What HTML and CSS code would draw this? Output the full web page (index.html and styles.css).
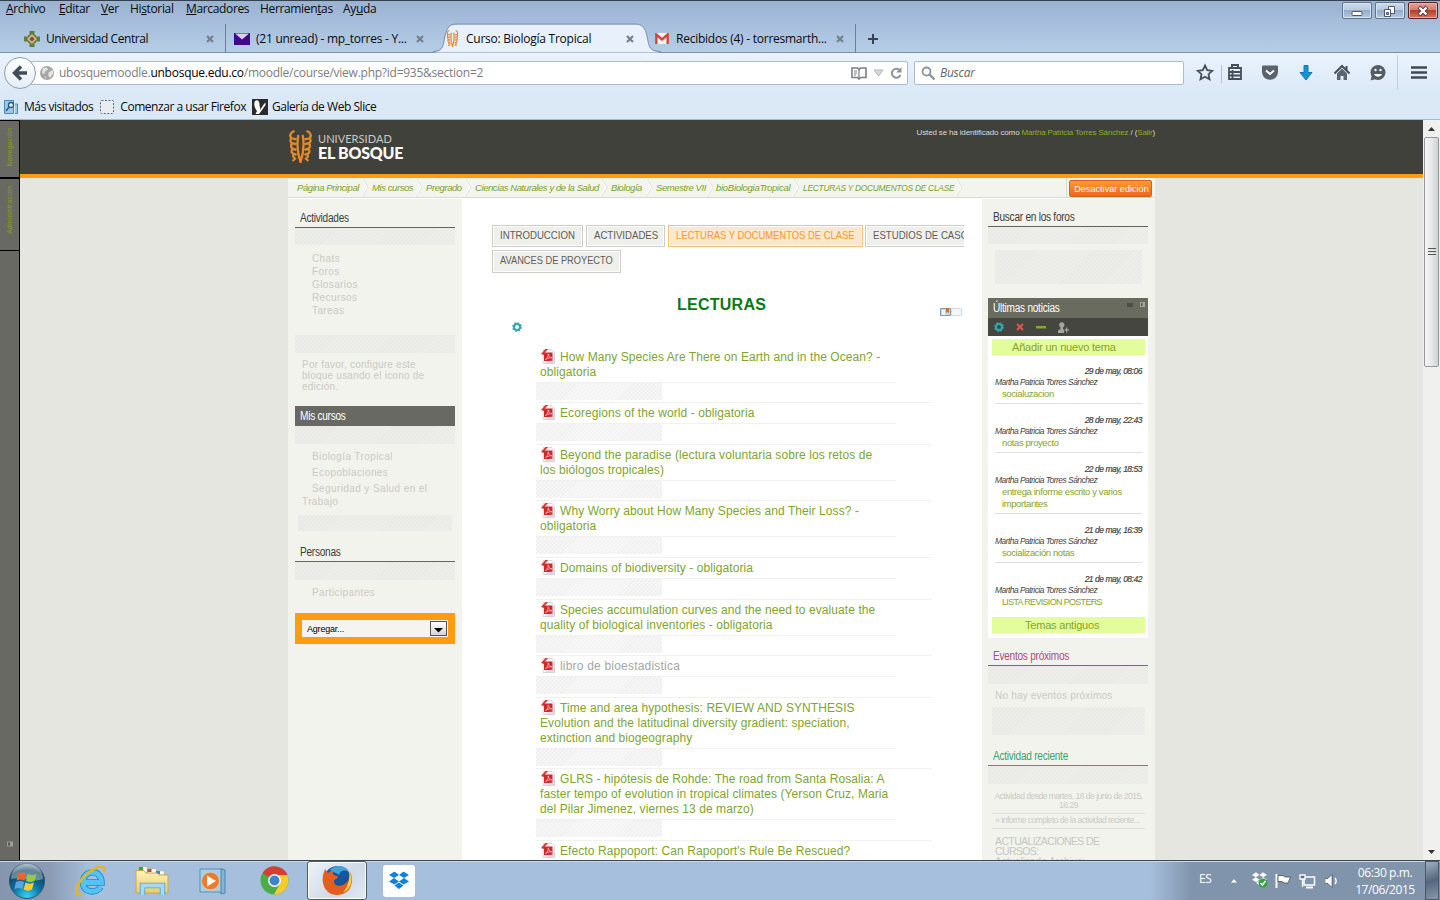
FILE: index.html
```html
<!DOCTYPE html>
<html lang="es">
<head>
<meta charset="utf-8">
<title>Curso: Biología Tropical</title>
<link rel="stylesheet" href="styles.css">
</head>
<body>
<svg class="defs" width="0" height="0">
  <defs>
    <symbol id="pdf" viewBox="0 0 14 15"><path d="M2 .5h9l2.500 2.500v11.500H2z" fill="#f7f5f7" stroke="#ddd8de"/><path d="M3 3.500h8.500v8.500H3z" fill="#d3262b"/><path d="M0 5L4.500 0H7L3 4.500V6z" fill="#d8332f"/><path d="M4.500 10.500C6.500 9 7.500 7 7.200 4.800c.5 2.500 1.800 3.700 3.800 4-2.200-.2-4.500.4-6.500 1.700z" fill="none" stroke="#fbd5d2" stroke-width=".7"/><path d="M3 14.500h10.500V9z" fill="#b9aebb" opacity=".35"/></symbol>
    <symbol id="gear" viewBox="0 0 10 10"><circle cx="5" cy="5" r="3" fill="none" stroke="#2fa9ad" stroke-width="2"/><circle cx="5" cy="5" r="4.200" fill="none" stroke="#2fa9ad" stroke-width="1.400" stroke-dasharray="1.700 1.600"/></symbol>
    <symbol id="beetle" viewBox="0 0 24 33"><g fill="none" stroke="#e58a2b" stroke-width="2.300"><path d="M6 1C2 2 .5 6 3 8c1.500 1.300 3.500.5 5 1.500M3 8c-1.500 2-1.500 4 .5 5s3 .5 4.500 1.500M3.500 13.500c-1.500 2-1 4 .5 5s2.500.5 4 1.500M4 19c-1.500 2-1 4 .5 4.500s2 .5 3.500 1.500M5 24.500c-1 2 0 3 1.500 3.500M7.500 28L4 31"/><path d="M18 1c4 1 5.500 5 3 7-1.500 1.300-3.500.5-5 1.500M21 8c1.500 2 1.500 4-.5 5s-3 .5-4.500 1.500M20.500 13.500c1.500 2 1 4-.5 5s-2.500.5-4 1.500M20 19c1.500 2 1 4-.5 4.500s-2 .5-3.500 1.500M19 24.500c1 2 0 3-1.500 3.500M16.500 28l3.500 3"/><path d="M9.800 5C8.500 13 9 24 12 32c3-8 3.500-19 2.200-27"/></g></symbol>
    <symbol id="x" viewBox="0 0 8 8"><path d="M1 1l6 6M7 1L1 7" stroke="currentColor" stroke-width="2.200"/></symbol>
    <symbol id="crumb" viewBox="0 0 8 19"><path d="M1 0l6 9.500L1 19" fill="none" stroke="#dcddd6"/><path d="M0 0l6 9.500L0 19" fill="none" stroke="#fff"/></symbol>
    <symbol id="dropbox" viewBox="0 0 20 18"><path d="M5.500 0L10 3.500 5 6.500 0 3.500zM14.500 0L10 3.500l5 3 5-3zM0 10l5-3.500 5 3.500-4.500 3zM20 10l-5-3.500-5 3.500 4.500 3zM5.500 14L10 11l4.500 3L10 17.500z" fill="currentColor"/></symbol>
    <linearGradient id="pane" x2="0" y2="1"><stop offset="0" stop-color="#fff3b8"/><stop offset="1" stop-color="#e9cd6b"/></linearGradient>
    <radialGradient id="orb" cx=".5" cy=".95" r=".95"><stop offset="0" stop-color="#2fd6f6"/><stop offset=".45" stop-color="#0b6f9f"/><stop offset=".8" stop-color="#12405f"/><stop offset="1" stop-color="#9fb6c6"/></radialGradient>
  </defs>
</svg>

<header class="chrome">
  <div class="menubar">
    <nav class="menus"><span><u>A</u>rchivo</span><span><u>E</u>ditar</span><span><u>V</u>er</span><span>Hi<u>s</u>torial</span><span><u>M</u>arcadores</span><span>Herramien<u>t</u>as</span><span>Ay<u>u</u>da</span></nav>
    <div class="winbtns">
      <i><svg width="30" height="16"><rect x="10" y="8.500" width="10" height="4" rx="1" fill="#fff" stroke="#4c5767"/></svg></i>
      <i><svg width="30" height="16" fill="#fff" stroke="#4c5767"><path d="M13.500 3.500h6v7h-6z"/><path d="M9.500 6.500h6v7h-6z"/><path d="M11.500 9.500h2v2h-2z" fill="#8da6c4"/></svg></i>
      <i class="close"><svg width="30" height="16"><path d="M11 4l8 8M19 4l-8 8" stroke="#54333a" stroke-width="4"/><path d="M11.500 4.500l7 7M18.500 4.500l-7 7" stroke="#fff" stroke-width="2.400"/></svg></i>
    </div>
  </div>
  <div class="tabs">
    <div class="tab t1"><svg width="16" height="16" viewBox="0 0 16 16"><path d="M5.500 0h5v4H12V5.500h4v5h-4V12h-1.500v4h-5v-4H4v-1.500H0v-5h4V4h1.500z" fill="#5f7d38"/><path d="M8 3l5 5-5 5-5-5z" fill="#c9b68c"/><path d="M8 5.500L10.500 8 8 10.500 5.500 8z" fill="#93412f"/></svg><span>Universidad Central</span><svg class="x"><use href="#x"/></svg></div>
    <div class="tab t2"><svg width="16" height="12"><path d="M0 0h16v12H0z" fill="#40098c"/><path d="M1 .5l7 6 7-6" fill="#d8d0ee"/></svg><span>(21 unread) - mp_torres - Y...</span><svg class="x"><use href="#x"/></svg></div>
    <div class="tab t3"><svg class="curve" width="228" height="30" viewBox="0 0 228 30"><path d="M0 29.500C11 29 10 22 12 13 14 4 17 1.500 24 1.500H202C209 1.500 212 4 214 13c2 9 1 16 14 16.500z" fill="#e8f1fb"/><path d="M0 28.500C11 28 10 22 12 13 14 4 17 1 24 1H202C209 1 212 4 214 13c2 9 1 15 14 15.500" fill="none" stroke="#7c8fa8"/></svg><svg width="13" height="17" viewBox="0 0 24 33"><use href="#beetle"/></svg><span>Curso: Biología Tropical</span><svg class="x"><use href="#x"/></svg></div>
    <div class="tab t4"><svg width="14" height="11"><path d="M0 0h14v11H0z" fill="#f3f1f1"/><path d="M1.300 11V1.500L7 6.500l5.700-5V11" fill="none" stroke="#d0453b" stroke-width="2.400"/></svg><span>Recibidos (4) - torresmarth...</span><svg class="x"><use href="#x"/></svg></div>
    <svg class="plus" width="10" height="10"><path d="M5 0v10M0 5h10" stroke="#39434f" stroke-width="2"/></svg>
  </div>
  <div class="navbar">
    <div class="back"><svg width="16" height="16" viewBox="0 0 16 16"><path d="M9 1.500L2.500 8 9 14.500M3 8h12" fill="none" stroke="#414d58" stroke-width="3.400"/></svg></div>
    <div class="url">
      <svg width="14" height="14" viewBox="0 0 14 14"><circle cx="7" cy="7" r="7" fill="#a6a6a6"/><path d="M3 2l4-.5 1 2-3 2-1 3-2-2zM9 6l4-2v4l-3 4-2-3zM4 10l2 1v2z" fill="#e3e3e3"/></svg>
      <span class="addr">ubosquemoodle.<b>unbosque.edu.co</b>/moodle/course/view.php?id=935&amp;section=2</span>
      <svg width="52" height="14" viewBox="0 0 52 14"><path d="M1 2h5.500L8 3.500 9.500 2H15v9.500H9.500L8 13l-1.500-1.500H1z" fill="#fff" stroke="#7b7f84" stroke-width="1.600"/><path d="M3 5h3M3 7h3M3 9h2" stroke="#7b7f84"/><path d="M8 4v8" stroke="#7b7f84" stroke-width="1.200"/><path d="M23 4h9l-4.500 6z" fill="#d5dae0" stroke="#abb4be"/><path d="M49 4.500A4.500 4.500 0 1 0 49.500 9" fill="none" stroke="#8f9499" stroke-width="2"/><path d="M50.500 1v5.500H45z" fill="#8f9499"/></svg>
    </div>
    <div class="search"><svg width="14" height="14"><circle cx="5.500" cy="5.500" r="4" fill="none" stroke="#8e949b" stroke-width="1.800"/><path d="M8.500 8.500l5 5" stroke="#8e949b" stroke-width="2.400"/></svg><em>Buscar</em></div>
    <svg class="tools" width="240" height="37" viewBox="0 0 240 37" fill="none" stroke="#454f5a">
      <path d="M17 11.500l2.200 4.700 5 .6-3.700 3.400 1 5-4.500-2.500-4.500 2.500 1-5-3.700-3.400 5-.6z" stroke-width="1.800"/>
      <path d="M33.500 11v18" stroke="#b3c2d2"/>
      <path d="M41 14h12v11H41zM41 18h12M41 21.500h12M44.500 16v9" stroke-width="1.800"/><path d="M44 13v-2h6v2" stroke-width="2"/>
      <path d="M75 11.500h14a1 1 0 0 1 1 1v5c0 11-16 11-16 0v-5a1 1 0 0 1 1-1z" fill="#59636d" stroke="none"/><path d="M78 16.500l4 3.500 4-3.500" stroke="#fff" stroke-width="2"/>
      <path d="M116 11.500h4v7h4L118 26l-6-7.500h4z" fill="#1893d1" stroke="#1276b5"/>
      <path d="M146.500 19.500L154 12l7.500 7.500" stroke-width="2"/><path d="M149 19.500l5-5 5 5V26h-3.500v-4h-3v4H149z" fill="#5a6570" stroke="none"/><path d="M158.500 12v4" stroke-width="2"/>
      <circle cx="190" cy="18.500" r="7.500" fill="#535d68" stroke="none"/><path d="M184 21l-1.500 5.500 7-2z" fill="#535d68" stroke="none"/><path d="M186 20c1.500 3.500 6.500 3.500 8 0z" fill="#fff" stroke="none"/><circle cx="187.500" cy="16" r="1.200" fill="#fff" stroke="none"/><circle cx="192.500" cy="16" r="1.200" fill="#fff" stroke="none"/>
      <path d="M209.500 1v35" stroke="#c1cedb"/>
      <path d="M223 13.500h16M223 18.500h16M223 23.500h16" stroke="#3f4954" stroke-width="2.600"/>
    </svg>
  </div>
  <div class="bookmarks">
    <svg width="14" height="16"><path d="M.5 1.500h9v13h-9zM11 5h2.500v9.500H11" fill="#9cc8e8" stroke="#4d88b4"/><circle cx="7" cy="6" r="2.500" fill="#e6f3fc" stroke="#275c86" stroke-width="1.300"/><path d="M5 8l-3 4" stroke="#275c86" stroke-width="1.600"/></svg><span>Más visitados</span>
    <svg width="14" height="14"><rect x=".5" y=".5" width="13" height="13" rx="1" fill="#e9edf0" stroke="#5d6871" stroke-dasharray="2 1.500"/></svg><span>Comenzar a usar Firefox</span>
    <svg width="16" height="16"><path d="M0 0h16v16H0z" fill="#2b2b2b"/><path d="M3 2c3-2 5 1 4.500 5 1 1 .5 3 .5 4l4-6 1.500-1.500V6L10 11l-3 4H3.500l1.500-3C2.500 9 1.500 4 3 2z" fill="#fff"/></svg><span>Galería de Web Slice</span>
  </div>
</header>

<main class="viewport">
  <aside class="dock">
    <div class="d1"><span>Navegación</span></div>
    <div class="d2"><span>Administración</span></div>
    <div class="d3"><svg width="6" height="6"><path d="M0 .5h6v5H0z" fill="#9c9d96"/><path d="M1 1.500h2v3H1z" fill="#55564f"/></svg></div>
  </aside>
  <div class="site">
    <div class="sitehead">
      <div class="wrap">
        <div class="logo"><svg width="25" height="33" viewBox="0 0 24 33"><use href="#beetle"/></svg><div><p class="uni">UNIVERSIDAD</p><p class="bosque">EL BOSQUE</p></div></div>
        <p class="login">Usted se ha identificado como <a>Martha Patricia Torres Sánchez</a> / (<a>Salir</a>)</p>
      </div>
    </div>
    <div class="page">
      <div class="crumbs">
        <ul><li><a>Página Principal</a><svg><use href="#crumb"/></svg></li><li><a>Mis cursos</a><svg><use href="#crumb"/></svg></li><li><a>Pregrado</a><svg><use href="#crumb"/></svg></li><li><a>Ciencias Naturales y de la Salud</a><svg><use href="#crumb"/></svg></li><li><a>Biología</a><svg><use href="#crumb"/></svg></li><li><a>Semestre VII</a><svg><use href="#crumb"/></svg></li><li class="bio"><a>bioBiologiaTropical</a><svg><use href="#crumb"/></svg></li><li class="here"><a>LECTURAS Y DOCUMENTOS DE CLASE</a><svg><use href="#crumb"/></svg></li></ul>
        <div class="editbox"><button>Desactivar edición</button></div>
      </div>
      <div class="cols">
        <aside class="left">
          <h2><span>Actividades</span></h2>
          <div class="strip first"></div>
          <ul class="acts"><li>Chats</li><li>Foros</li><li>Glosarios</li><li>Recursos</li><li>Tareas</li></ul>
          <div class="strip"></div>
          <p class="hint">Por favor, configure este<br>bloque usando el icono de<br>edición.</p>
          <h2 class="dark"><span>Mis cursos</span></h2>
          <div class="strip"></div>
          <ul class="courses"><li>Biología Tropical</li><li>Ecopoblaciones</li><li>Seguridad y Salud en el<br>Trabajo</li></ul>
          <div class="strip inset"></div>
          <h2 class="people"><span>Personas</span></h2>
          <div class="strip"></div>
          <p class="part">Participantes</p>
          <div class="add"><div><span>Agregar...</span><i><svg width="9" height="5"><path d="M0 0h9L4.500 4.500z"/></svg></i></div></div>
        </aside>
        <section class="center">
          <div class="sections">
            <div class="row"><a class="s1"><b>INTRODUCCION</b></a><a class="s2"><b>ACTIVIDADES</b></a><a class="s3"><b>LECTURAS Y DOCUMENTOS DE CLASE</b></a><a class="s4"><b>ESTUDIOS DE CASO</b></a></div>
            <div class="row two"><a class="s5"><b>AVANCES DE PROYECTO</b></a></div>
          </div>
          <div class="heading"><h1>LECTURAS</h1><svg width="22" height="8"><path d="M.5.500h10v7H.500z" fill="#c4d8e5" stroke="#8799a6"/><path d="M6 0h3v5L7.500 4 6 5z" fill="#c9713d"/><path d="M2 2h3v5H2z" fill="#eef5fa"/><path d="M11.500.500h10v7h-10z" fill="#f3f6fa" stroke="#c5cfda" stroke-dasharray="2 1"/></svg></div>
          <svg class="gear" width="10" height="10"><use href="#gear"/></svg>
          <ul class="items">
            <li><p><svg><use href="#pdf"/></svg>How Many Species Are There on Earth and in the Ocean? -<br>obligatoria</p><div class="strip"></div></li>
            <li><p><svg><use href="#pdf"/></svg>Ecoregions of the world - obligatoria</p><div class="strip"></div></li>
            <li><p><svg><use href="#pdf"/></svg>Beyond the paradise (lectura voluntaria sobre los retos de<br>los biólogos tropicales)</p><div class="strip"></div></li>
            <li><p><svg><use href="#pdf"/></svg>Why Worry about How Many Species and Their Loss? -<br>obligatoria</p><div class="strip"></div></li>
            <li><p><svg><use href="#pdf"/></svg>Domains of biodiversity - obligatoria</p><div class="strip"></div></li>
            <li><p><svg><use href="#pdf"/></svg>Species accumulation curves and the need to evaluate the<br>quality of biological inventories - obligatoria</p><div class="strip"></div></li>
            <li class="off"><p><svg><use href="#pdf"/></svg>libro de bioestadistica</p><div class="strip"></div></li>
            <li><p><svg><use href="#pdf"/></svg>Time and area hypothesis: REVIEW AND SYNTHESIS<br>Evolution and the latitudinal diversity gradient: speciation,<br>extinction and biogeography</p><div class="strip"></div></li>
            <li><p><svg><use href="#pdf"/></svg>GLRS - hipótesis de Rohde: The road from Santa Rosalia: A<br>faster tempo of evolution in tropical climates (Yerson Cruz, Maria<br>del Pilar Jimenez, viernes 13 de marzo)</p><div class="strip"></div></li>
            <li><p><svg><use href="#pdf"/></svg>Efecto Rappoport: Can Rapoport's Rule Be Rescued?</p></li>
          </ul>
        </section>
        <aside class="right">
          <h2 class="forum"><span>Buscar en los foros</span></h2>
          <div class="strip first"></div>
          <div class="strip box"></div>
          <div class="news">
            <h2><span>Últimas noticias</span><svg width="20" height="7"><path d="M0 1h6v4H0z" fill="#4b4c45"/><path d="M13 0h5v5h-5z" fill="#a4a59f"/><path d="M14 1h1.500v3H14z" fill="#55564f"/></svg></h2>
            <div class="bar"><svg width="10" height="10"><use href="#gear"/></svg><svg class="del" width="8" height="8"><use href="#x"/></svg><svg width="10" height="3"><path d="M0 0h10v2.500H0z" fill="#86a63c"/></svg><svg width="11" height="11"><circle cx="3.800" cy="2.800" r="2.600" fill="#a5a6a2"/><path d="M2.500 4h2.600v3l1 1v3H0V8.500L2.500 7zM8 5.500h1.200v1.800H11v1.200H9.200v2H8v-2H6.500V7.300H8z" fill="#a5a6a2"/></svg></div>
            <a class="green">Añadir un nuevo tema</a>
            <ul>
              <li><time>29 de may, 08:06</time><i>Martha Patricia Torres Sánchez</i><a>socialuzacion</a></li>
              <li><time>28 de may, 22:43</time><i>Martha Patricia Torres Sánchez</i><a>notas proyecto</a></li>
              <li><time>22 de may, 18:53</time><i>Martha Patricia Torres Sánchez</i><a>entrega informe escrito y varios<br>importantes</a></li>
              <li><time>21 de may, 16:39</time><i>Martha Patricia Torres Sánchez</i><a>socialización notas</a></li>
              <li><time>21 de may, 08:42</time><i>Martha Patricia Torres Sánchez</i><a class="caps">LISTA REVISION POSTERS</a></li>
            </ul>
            <a class="green old">Temas antiguos</a>
          </div>
          <h2 class="pink"><span>Eventos próximos</span></h2>
          <div class="strip"></div>
          <p class="none">No hay eventos próximos</p>
          <div class="strip wide"></div>
          <h2 class="teal"><span>Actividad reciente</span></h2>
          <div class="strip"></div>
          <p class="since">Actividad desde martes, 16 de junio de 2015,<br>16:29</p>
          <p class="report">» Informe completo de la actividad reciente...</p>
          <p class="updates">ACTUALIZACIONES DE<br>CURSOS:</p>
          <p class="more">Actualizado Archivo:</p>
        </aside>
      </div>
    </div>
  </div>
  <div class="scroll">
    <i class="arr"><svg width="7" height="4"><path d="M0 4h7L3.500 0z" fill="#333"/></svg></i>
    <div class="thumb"><svg width="8" height="8"><path d="M0 .5h8M0 3.500h8M0 6.500h8" stroke="#555"/></svg></div>
    <i class="arr"><svg width="7" height="4"><path d="M0 0h7L3.500 4z" fill="#333"/></svg></i>
  </div>
</main>

<footer class="taskbar">
  <div class="apps">
    <svg width="36" height="36" viewBox="0 0 36 36"><circle cx="18" cy="18" r="17.500" fill="url(#orb)" stroke="#33536e"/><path d="M2 16a16 16 0 0 1 32 0c-10 4-22-3-32 0z" fill="#dbe8f0" opacity=".4"/><path d="M9 10.500c3-1.500 5.500-1.500 8 0l-1.500 7c-2.500-1.500-5-1.500-8 0z" fill="#f0642b"/><path d="M18.500 11c3 1.500 6 1.500 9 0l-2 7c-3 1.500-5.500 1.500-8.500 0z" fill="#9bcb3c"/><path d="M7 19c3-1.500 5.500-1.500 8 0l-1.700 7c-2.500-1.500-5-1.500-8 0z" fill="#5aa5e0"/><path d="M16.500 19.500c3 1.500 5.500 1.500 8.500 0l-2 7c-3 1.500-5.500 1.500-8.300 0z" fill="#fccb2c"/></svg>
    <svg width="32" height="32" viewBox="0 0 32 32"><path d="M9 17.500h17.500c0-14-18.500-13-18.500 0 0 11 14 11 17.500 4.500" fill="none" stroke="#1f87c9" stroke-width="6.500"/><path d="M9 17.500h17.500c0-14-18.500-13-18.500 0 0 11 14 11 17.500 4.500" fill="none" stroke="#55c3f2" stroke-width="4.800"/><path d="M6 29C-3 31 1 18 13 8 23 0 32-1 29 7" fill="none" stroke="#e9b51d" stroke-width="2.500"/></svg>
    <svg width="34" height="32" viewBox="0 0 34 32"><path d="M4 2h8v6H4zM13 4h8v6h-8zM21 6h8v4h-8z" fill="#fff" stroke="#d3bd6c" stroke-width=".6"/><path d="M4 2h4v3H4z" fill="#3ba23f"/><path d="M12.500 4h4v3h-4z" fill="#c44b30"/><path d="M21 6h4v3h-4z" fill="#3a86c9"/><path d="M1 5.500h8L11 8h11l1.500 2H33v18H1z" fill="url(#pane)" stroke="#c8a850"/><path d="M7.500 30V20.500h20V30" fill="none" stroke="#5b9fc8" stroke-width="5.500"/><path d="M7.500 30V20.500h20V30" fill="none" stroke="#a5daf3" stroke-width="3.800"/></svg>
    <svg width="29" height="28" viewBox="0 0 29 28"><path d="M1 2h23v23H1z" fill="#a9cde1" stroke="#5990b4"/><path d="M22 2l4 1v23l-4 1z" fill="#7eb6d8" stroke="#4e86ab"/><circle cx="11.500" cy="14" r="9" fill="#ee7b2b" stroke="#c9d0d0"/><path d="M8 8.500l9 5.500-9 5.500z" fill="#fff"/></svg>
    <svg width="29" height="29" viewBox="0 0 29 29"><circle cx="14.500" cy="14.500" r="14" fill="#4aad48"/><path d="M14.500 14.500L2.500 7.300A14 14 0 0 1 27.500 9H14.500z" fill="#d93d32"/><path d="M14.500 9h12.800A14 14 0 0 1 14 28.500l6-11z" fill="#f6cb2b"/><circle cx="14.500" cy="14.500" r="6.500" fill="#fff"/><circle cx="14.500" cy="14.500" r="5" fill="#3d84cc"/></svg>
    <div class="active"><svg width="31" height="31" viewBox="0 0 31 31"><circle cx="15.500" cy="14.500" r="13.500" fill="#17549b"/><path d="M8 5c5-6 16-5 19 2-5-3-9-1-10 3-3-3-6-2-9-5z" fill="#3fa3dc"/><path d="M27.500 6c6 10 1 24-12 24C5 30-1 21 1 10l2-6 3 4c2-2 4-2.500 6-2-1.500 2-1.500 3 0 4l4 1.500c0 2.500-4 2.500-4 4.500 0 5 6 6 10 3.500 5-3 7-7.500 5.500-13.500z" fill="#e1601f"/><path d="M27 6c5 9 2 18-6 22 4-6 7.500-12 6-22z" fill="#ffd241"/></svg></div>
    <div class="db"><svg width="20" height="19" viewBox="0 0 20 18"><use href="#dropbox"/></svg></div>
  </div>
  <div class="tray">
    <span>ES</span>
    <svg class="up" width="8" height="5"><path d="M0 5h8L4 .5z" fill="#fff" stroke="#5a6a7c" stroke-width=".6"/></svg>
    <svg class="dbx" width="17" height="17"><use href="#dropbox" width="15" height="14"/><circle cx="11" cy="11" r="4.500" fill="#2fa53c"/><path d="M8.500 11l2 2 3-4" fill="none" stroke="#fff" stroke-width="1.500"/></svg>
    <svg width="16" height="16"><path d="M1.500 1v14" stroke="#fff" stroke-width="2"/><path d="M3 2.500h5l2 1.500h5.500L13 10H9L7 8.500H3z" fill="#fff" stroke="#333d4a" stroke-width=".7"/></svg>
    <svg width="17" height="16"><path d="M5 4h10.500v8H5z" fill="#7e94ad" stroke="#fff" stroke-width="1.500"/><path d="M7 14.500h7" stroke="#fff" stroke-width="2"/><path d="M1 2h5v4H1zM3.500 6v8" fill="#5c6d80" stroke="#fff" stroke-width="1.300"/></svg>
    <svg width="14" height="14"><path d="M0 4.500h3L7 .5v13L3 9.500H0z" fill="#fff" stroke="#333d4a" stroke-width=".6"/><path d="M10 4c1.500 2 1.500 4 0 6" fill="none" stroke="#fff" stroke-width="1.400"/></svg>
    <p class="clock">06:30 p.m.<br>17/06/2015</p>
    <div class="peek"></div>
  </div>
</footer>
</body>
</html>
```

FILE: styles.css
```css
* { box-sizing: border-box; }
body, p, h1, h2, ul { margin: 0; padding: 0; }
ul { list-style: none; }
svg { display: block; flex: none; }
body {
  width: 1440px; height: 900px; overflow: hidden;
  display: flex; flex-direction: column;
  font-family: "Liberation Sans", Arial, sans-serif;
}
.defs { position: absolute; }

/* browser chrome */
.chrome {
  height: 120px; flex: none; color: #0a0a0a;
  font: 12px/16px "Open Sans", "Noto Sans", sans-serif; letter-spacing: -.25px; white-space: nowrap;
  border-top: 1px solid #35404f; border-bottom: 1px solid #a0b9d3;
  background: linear-gradient(#9ab3d1, #b6cde7 51px, #7c8fa8 51px, #7c8fa8 52px, #ebf3fc 52px, #dbe9f7 90px, #dbe9f7);
}
.menubar { height: 23px; display: flex; justify-content: space-between; }
.menus { display: grid; grid-template-columns: 53px 42px 29px 56px 74px 83px 50px; padding-left: 6px; letter-spacing: -.35px; }
.menus u { text-underline-offset: 1px; }
.winbtns { display: flex; gap: 3px; padding: 1px 2px 0 0; }
.winbtns i { width: 30px; height: 17px; border: 1px solid #5f738c; border-radius: 2px; background: linear-gradient(#cbdaea, #b6cadf 50%, #93adc9 50%, #b4cae0); display: flex; justify-content: center; box-shadow: inset 0 0 0 1px #d7e4f1; }
.winbtns .close { border-color: #57232a; background: linear-gradient(#e3a294, #d4796a 50%, #b73c27 50%, #d07a62); box-shadow: inset 0 0 0 1px #e9b4a8; }
.tabs { height: 29px; display: flex; align-items: center; }
.tab { width: 210px; height: 29px; display: flex; align-items: center; position: relative; }
.tab > svg { position: relative; }
.tab .curve { position: absolute; left: -9px; top: -1px; }
.tab span { flex: 1; padding-left: 7px; position: relative; }
.tab .x { width: 8px; height: 8px; color: #74808d; margin-right: 15px; }
.t1 { width: 226px; padding-left: 24px; border-right: 1px solid #6d8098; margin-right: 8px; }
.tab.t1 span { padding-left: 6px; letter-spacing: -.45px; }
.t1 .x { margin-right: 11px; }
.t2 { width: 208px; }
.t2 span { padding-left: 6px; } .t2 .x { margin-right: 18px; }
.t3 { width: 206px; padding-left: 4px; z-index: 1; }
.t3 .x { margin-right: 14px; }
.t4 { width: 208px; padding-left: 7px; border-right: 1px solid #6d8098; }
.t4 .x { margin-right: 11px; }
.plus { margin-left: 12px; }
.navbar { height: 37px; display: flex; align-items: center; padding-left: 4px; }
.back { width: 32px; height: 32px; border-radius: 50%; border: 1px solid #8f9dad; background: linear-gradient(#fff, #e5edf5); display: grid; place-items: center; z-index: 1; margin-top: 2px; }
.url { margin-left: -6px; width: 878px; height: 24px; margin-top: 3px; border: 1px solid #a9bdd3; border-radius: 2px; background: #fff; display: flex; align-items: center; padding: 0 4px 0 9px; color: #7d7d7d; }
.addr { flex: 1; padding-left: 5px; letter-spacing: -.25px; }
.addr b { color: #000; font-weight: 400; }
.search { margin: 3px 0 0 6px; width: 270px; height: 24px; border: 1px solid #a9bdd3; border-radius: 2px; background: #fff; display: flex; align-items: center; padding-left: 6px; gap: 5px; color: #666; }
.tools { margin-left: 4px; margin-top: 2px; }
.bookmarks { height: 30px; display: flex; align-items: center; padding: 4px 0 0 4px; letter-spacing: -.46px; }
.bookmarks span { padding: 0 7px 0 6px; }
.bookmarks span:last-child { padding-left: 4px; }
.bookmarks svg:last-of-type { margin-left: -1px; }

/* page viewport */
.viewport { height: 740px; flex: none; display: flex; overflow: hidden; background: #e5e6df; }
.dock { width: 20px; flex: none; border-right: 1px solid #000; display: flex; flex-direction: column; background: #686962; }
.dock div { display: grid; justify-items: center; align-items: start; border-top: 1px solid #000; }
.dock span { writing-mode: vertical-rl; transform: rotate(180deg); font-size: 7px; line-height: 10px; color: #8b9a2b; margin-left: 1px; white-space: nowrap; letter-spacing: .15px; }
.d1 { height: 58px; padding-top: 7px; border-bottom: 1px solid #000; }
.d2 { height: 73px; padding-top: 7px; border-bottom: 1px solid #000; }
.dock .d3 { flex: 1; border: 0; align-items: end; padding-bottom: 13px; }
.site { width: 1403px; flex: none; }
.sitehead { height: 58px; background: #40413a; border-bottom: 4px solid #ff9c12; padding-left: 268px; }
.wrap { width: 867px; display: flex; justify-content: space-between; }
.logo { display: flex; gap: 5px; padding-top: 10px; }
.logo p { font-family: Lato, sans-serif; white-space: nowrap; color: #c9cac5; }
.uni { font-size: 11px; line-height: 14px; padding-top: 2px; letter-spacing: .05px; }
.logo .bosque { font-size: 16px; line-height: 14px; font-weight: 900; color: #fff; letter-spacing: -.25px; }
.login { font-size: 8px; line-height: 10px; padding-top: 8px; color: #dcdcd6; letter-spacing: -.15px; white-space: nowrap; }
.login a { color: #8fb022; }
.page { width: 867px; margin-left: 268px; }
.crumbs { height: 20px; background: #f3f4ee; border-bottom: 1px solid #d9dad2; display: flex; }
.crumbs ul { width: 779px; padding-left: 9px; display: grid; grid-template-columns: 75px 54px 49px 136px 45px 60px 87px 162px; border-right: 1px solid #d9dad2; }
.crumbs li { display: flex; justify-content: space-between; font: italic 9.500px/19px "Liberation Sans", Arial, sans-serif; letter-spacing: -.42px; color: #7aa32a; white-space: nowrap; }
.crumbs .bio { letter-spacing: -.28px; }
.crumbs .here a { letter-spacing: -.3px; width: 152px; transform: scaleX(.885); transform-origin: left; }
.crumbs li svg { width: 8px; height: 19px; margin-right: 3px; }
.editbox { padding: 2px 0 0 2px; display: flex; }
.editbox button { width: 83px; height: 17px; border: 1px solid #d9601c; border-radius: 2px; background: linear-gradient(#fd9c2c, #ee6620); color: #fff; font: 9px/14px "Liberation Sans", Arial, sans-serif; padding: 0 0 0 2px; white-space: nowrap; letter-spacing: .05px; }
.cols { display: grid; grid-template-columns: 174px 520px 173px; height: 680px; }
.left { background: #f2f3ed; padding: 9px 7px 0; border-top: 1px solid #fff; }
.right { background: #f2f3ed; padding: 8px 7px 0 6px; border-top: 1px solid #fff; overflow: hidden; }
.center { background: #fff; padding: 27px 18px 0 30px; overflow: hidden; }
.strip { height: 18px; background: repeating-linear-gradient(135deg, #e8e9e4 0 1px, #edeee9 1px 2.800px); }
.first { height: 17px; }
h2 { font-size: 12px; font-weight: 400; line-height: 20px; height: 20px; padding-left: 5px; color: #3c3d38; border-bottom: 1px solid #63645c; letter-spacing: -.3px; white-space: nowrap; }
h2 span { display: inline-block; transform: scaleX(.84); transform-origin: left; }
.dark { background: #686962; color: #fff; border: 0; }
.left ul, .hint, .part { font-size: 10px; color: #c9cac3; letter-spacing: .4px; white-space: nowrap; }
.acts { padding: 7px 0 0 17px; height: 90px; line-height: 13px; }
.left .hint { padding: 6px 0 0 7px; height: 53px; line-height: 11px; letter-spacing: .22px; }
.courses { padding: 6px 0 0 7px; height: 71px; line-height: 13px; }
.courses li { text-indent: 10px; margin-bottom: 3px; }
.inset { margin: 0 3px; height: 16px; }
.people { margin-top: 11px; }
.part { padding: 6px 0 0 17px; height: 33px; line-height: 13px; }
.add { background: #ff9c12; height: 31px; padding: 7px; }
.add div { height: 17px; background: #f5f5ef; display: flex; align-items: center; justify-content: space-between; font-size: 9px; letter-spacing: -.2px; padding: 0 1px 0 5px; }
.add i { width: 17px; height: 15px; border: 1px solid #555; background: linear-gradient(#fff, #d4d4d4); display: grid; place-items: center; padding-top: 4px; }

.sections { height: 48px; overflow: hidden; }
.row { display: flex; gap: 3px; height: 22px; }
.row.two { margin-top: 3px; height: 23px; }
.row a { flex: none; border: 1px solid #cfcfc9; box-shadow: inset 0 0 0 1px #fff; background: #efefeb; color: #5d5e58; font-size: 11px; line-height: 19px; padding-left: 7px; white-space: nowrap; }
.row b { font-weight: 400; display: inline-block; transform-origin: left; transform: scaleX(.875); }
.s1 { width: 91px; } .s2 { width: 79px; }
.row .s3 { width: 195px; background: #fde8ce; border-color: #f5c078; color: #f39b2d; margin-right: -1px; }
.row .s3 b { transform: scaleX(.857); }
.s4 { width: 120px; } .s5 { width: 129px; }
.row .s5 b { transform: scaleX(.842); }
.heading { display: flex; justify-content: flex-end; padding: 22px 2px 0 0; height: 49px; }
h1 { font-size: 16px; line-height: 20px; color: #0a7a10; width: 89px; margin-right: 174px; letter-spacing: .25px; white-space: nowrap; }
.heading svg { margin-top: 13px; }
.gear { margin: 0 0 0 20px; }
.items { padding: 14.600px 0 0 44px; width: 440px; }
.items li { border-bottom: 1px solid #f1f1ee; padding: 3px 0 2.600px; }
.items p { font-size: 12px; line-height: 15px; color: #80a52e; letter-spacing: .08px; white-space: nowrap; padding: 0 0 2px 4px; width: 360px; border-bottom: 1px solid #f1f1ee; }
.items p svg { display: inline-block; width: 14px; height: 15px; vertical-align: -3px; margin: -4px 5px 0 1px; }
.items .off p { color: #a6a6a6; letter-spacing: .2px; }
.items .strip { width: 126px; height: 17px; background: repeating-linear-gradient(135deg, #f0f0f0 0 1px, #f7f7f7 1px 2.800px); }

.forum { height: 20px; }
.box { margin: 6px 6px 0 7px; height: 34px; }
.news { margin-top: 14px; background: #fff; height: 340px; }
.news h2 { background: #696b5e; color: #fff; border: 0; display: flex; justify-content: space-between; }
.news h2 svg { margin: 4px 1px 0 0; }
.bar { height: 18px; background: #45463f; display: flex; align-items: center; gap: 12px; padding-left: 6px; }
.bar .del { color: #d7574e; }
.green { display: block; margin: 3px 3px 0 4px; height: 16px; background: #e4fd9c; color: #86a42a; font-size: 11px; line-height: 16px; padding-left: 20px; white-space: nowrap; letter-spacing: -.2px; }
.old { margin-top: 9px; padding-left: 33px; }
.news li { margin: 0 6px 0 7px; border-bottom: 1px solid #dfdfdc; padding: 10px 0 3px; font-size: 8.500px; line-height: 12px; color: #44453f; white-space: nowrap; letter-spacing: -.55px; }
.news li:last-child { border: 0; padding-bottom: 0; }
.news time { display: block; text-align: right; font-style: italic; letter-spacing: -.48px; -webkit-text-stroke: .2px; }
.news li i { display: block; line-height: 11px; }
.news li a { display: block; padding-left: 7px; color: #86a42a; font-size: 9.500px; line-height: 12px; letter-spacing: -.4px; }
.news li .caps { font-size: 9px; letter-spacing: -.68px; }
.pink { margin-top: 8px; color: #b5487c; border-color: #b5487c; }
.none { font-size: 10px; line-height: 12px; height: 23px; padding: 6px 0 0 7px; color: #c9cac3; letter-spacing: .2px; white-space: nowrap; }
.wide { margin: 0 3px 0 4px; height: 28px; }
.teal { margin-top: 11px; color: #3f9f76; border-color: #3f9f76; }
.since { margin: 0 3px 0 4px; height: 30px; padding-top: 8px; text-align: center; border-bottom: 1px solid #dedfd8; font-size: 8.500px; line-height: 9px; color: #c9cac3; letter-spacing: -.5px; white-space: nowrap; }
.report { margin: 0 3px 0 4px; padding-left: 3px; height: 15px; border-bottom: 1px solid #dedfd8; font-size: 8.500px; line-height: 13px; color: #c9cac3; letter-spacing: -.54px; white-space: nowrap; }
.updates { padding: 7px 0 0 7px; font-size: 10.500px; line-height: 10px; height: 28px; color: #c6c7c0; letter-spacing: -.62px; white-space: nowrap; }
.more { padding-left: 7px; font-size: 10px; line-height: 10px; color: #c6c7c0; white-space: nowrap; }

.scroll { width: 17px; background: #f0f0ef; display: flex; flex-direction: column; align-items: center; }
.arr { height: 17px; display: grid; place-items: center; }
.thumb { width: 15px; height: 230px; border: 1px solid #979797; border-radius: 2px; background: linear-gradient(90deg, #f5f5f5, #e8e8ea 50%, #cfd0d3); display: grid; place-items: center; margin-bottom: auto; }

/* taskbar */
.taskbar { height: 40px; flex: none; border-top: 1px solid #3b4756; box-shadow: inset 0 1px #c9d8e8; display: flex; justify-content: space-between; font: 12px/17px "Open Sans", "Noto Sans", sans-serif; color: #fff;
  background: linear-gradient(90deg, #8496ad 0, #8a9cb3 50px, #a6bfdc 90px, #a6bfdc 1150px, #8094ac 1192px, #8094ac); }
.apps { display: grid; grid-template-columns: 66px 60px 64px 61px 47px 76px 40px; align-items: center; padding-left: 9px; }
.active { width: 60px; height: 39px; border: 1px solid #4d5a6a; border-radius: 3px; background: linear-gradient(135deg, #eef2f7, #cfdae8 60%, #e2eaf3); box-shadow: inset 0 0 0 1px #fff; display: grid; place-items: center; }
.db { width: 32px; height: 32px; background: #fff; border-radius: 3px; display: grid; place-items: center; color: #1081de; }
.tray { display: grid; grid-template-columns: 31px 22px 23px 24px 26px 24px 76px 15px; align-items: center; white-space: nowrap; }
.tray > span { margin-top: -5px; letter-spacing: -.3px; }
.dbx { color: #fff; }
.clock { text-align: center; letter-spacing: -.4px; padding-right: 4px; }
.peek { width: 14px; height: 39px; border: 1px solid #4a586a; background: linear-gradient(160deg, #9fb0c3, #56667c 50%, #8798ad); }
```
